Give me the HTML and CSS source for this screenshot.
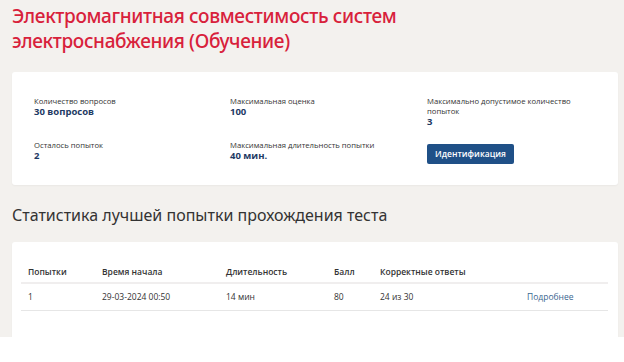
FILE: index.html
```html
<!DOCTYPE html>
<html lang="ru">

<head>
    <meta charset="UTF-8" />
    <title>Тест</title>
    <link rel="stylesheet" href="styles.css">
</head>

<body>
    <div class="page">
        <h1 class="title">Электромагнитная совместимость систем электроснабжения (Обучение)</h1>

        <!-- Info card -->
        <div class="card info">
            <div class="info-item">
                <div class="label">Количество вопросов</div>
                <div class="value">30 вопросов</div>
            </div>
            <div class="info-item">
                <div class="label">Максимальная оценка</div>
                <div class="value">100</div>
            </div>
            <div class="info-item">
                <div class="label">Максимально допустимое количество попыток</div>
                <div class="value">3</div>
            </div>
            <div class="info-item">
                <div class="label">Осталось попыток</div>
                <div class="value">2</div>
            </div>
            <div class="info-item">
                <div class="label">Максимальная длительность попытки</div>
                <div class="value">40 мин.</div>
            </div>
            <div class="info-item">
                <button class="btn">Идентификация</button>
            </div>
        </div>

        <h2 class="subtitle">Статистика лучшей попытки прохождения теста</h2>

        <!-- Stats table -->
        <div class="card stats">
            <table>
                <thead>
                    <tr>
                        <th class="c1">Попытки</th>
                        <th class="c2">Время начала</th>
                        <th class="c3">Длительность</th>
                        <th class="c4">Балл</th>
                        <th class="c5">Корректные ответы</th>
                        <th></th>
                    </tr>
                </thead>
                <tbody>
                    <tr>
                        <td>1</td>
                        <td>29-03-2024 00:50</td>
                        <td>14 мин</td>
                        <td>80</td>
                        <td>24 из 30</td>
                        <td><a href="#">Подробнее</a></td>
                    </tr>
                </tbody>
            </table>
        </div>
    </div>
</body>

</html>
```

FILE: styles.css
```css
html,
body {
    margin: 0;
    padding: 0;
    background: #fff;
    font-family: 'Open Sans', sans-serif;
}

* {
    box-sizing: border-box;
}

.page {
    background: #f3f1ee;
    height: 337px;
    padding: 4px 6px 0 12px;
    overflow: hidden;
}

.title {
    margin: 0;
    width: 420px;
    font-family: 'Noto Sans', sans-serif;
    font-size: 19px;
    line-height: 25px;
    letter-spacing: -0.35px;
    font-weight: 500;
    color: #d8213b;
}

.card {
    background: #fff;
    border-radius: 3px;
    box-shadow: 0 1px 2px rgba(0, 0, 0, 0.04);
}

/* Info card */
.info {
    margin-top: 18px;
    height: 113px;
    padding: 24px 0 0 22px;
    display: grid;
    grid-template-columns: 196px 197px 170px;
    grid-auto-rows: 44px;
}

.label {
    font-size: 7.7px;
    line-height: 10px;
    color: #333;
}

.value {
    font-size: 9.5px;
    line-height: 11px;
    font-weight: 700;
    color: #1e3a64;
}

.btn {
    margin-top: -5px;
    height: 20px;
    width: 87px;
    padding: 0;
    border: none;
    border-radius: 2px;
    background: #1f5087;
    color: #fff;
    font-family: 'Open Sans', sans-serif;
    font-size: 8.5px;
    font-weight: 600;
}

.subtitle {
    margin: 19px 0 0;
    font-family: 'Noto Sans', sans-serif;
    font-size: 16px;
    line-height: 22px;
    font-weight: 400;
    color: #333;
}

/* Stats table */
.stats {
    margin-top: 16px;
    height: 110px;
    padding: 19px 10px 0 9px;
}

table {
    width: 100%;
    border-collapse: collapse;
    font-size: 8.5px;
    color: #333;
}

th {
    text-align: left;
    font-weight: 600;
    height: 22px;
    padding: 0 0 0 7px;
    border-bottom: 2px solid #f0eeee;
}

td {
    height: 27px;
    padding: 0 0 0 7px;
    border-bottom: 1px solid #e6e6e6;
}

.c1 { width: 74px; }
.c2 { width: 124px; }
.c3 { width: 108px; }
.c4 { width: 46px; }
.c5 { width: 147px; }

a {
    color: #3a6690;
    text-decoration: none;
}
```
